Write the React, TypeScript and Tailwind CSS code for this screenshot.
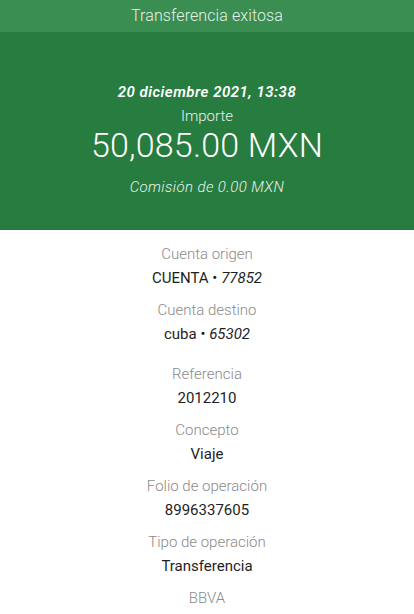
export default function App() {
  const rows: [string, React.ReactNode][] = [
    ["Referencia", "2012210"],
    ["Concepto", "Viaje"],
    ["Folio de operación", "8996337605"],
    ["Tipo de operación", "Transferencia"],
  ];
  return (
    <div className="w-[414px] h-[614px] overflow-hidden bg-white" style={{ fontFamily: "Roboto, 'Liberation Sans', sans-serif" }}>
      <div className="h-[32px] bg-[#3a8e51] flex items-center justify-center text-[#e6f2e9] text-[16px] font-light tracking-[0.1px]">
        Transferencia exitosa
      </div>
      <div className="h-[198px] bg-[#277c40] flex flex-col items-center text-white pt-[50px]">
        <div className="text-[15px] font-semibold italic leading-[20px] tracking-[0.5px]">20 diciembre 2021, 13:38</div>
        <div className="text-[15px] font-light leading-[20px] mt-[4px] text-[#e9f3ec]">Importe</div>
        <div className="text-[34px] font-light leading-[36px] mt-[1px] tracking-[0.2px]">50,085.00 MXN</div>
        <div className="text-[15px] font-light italic leading-[20px] mt-[14px] text-[#e9f3ec] tracking-[0.4px]">Comisión de 0.00 MXN</div>
      </div>
      <div className="flex flex-col items-center pt-[14px] text-[15px]">
        <div className="flex flex-col items-center">
          <div className="leading-[20px] text-[#8a8a8a] font-light">Cuenta origen</div>
          <div className="leading-[20px] mt-[4px] text-[#1e1e1e]">CUENTA • <span className="italic">77852</span></div>
        </div>
        <div className="flex flex-col items-center mt-[12px]">
          <div className="leading-[20px] text-[#8a8a8a] font-light">Cuenta destino</div>
          <div className="leading-[20px] mt-[4px] text-[#1e1e1e]">cuba • <span className="italic">65302</span></div>
        </div>
        <div className="flex flex-col items-center mt-[20px] gap-[12px]">
          {rows.map(([l, v]) => (
            <div key={l} className="flex flex-col items-center">
              <div className="leading-[20px] text-[#8a8a8a] font-light">{l}</div>
              <div className="leading-[20px] mt-[4px] text-[#1e1e1e]">{v}</div>
            </div>
          ))}
          <div className="leading-[20px] text-[#8a8a8a] font-light">BBVA</div>
        </div>
      </div>
    </div>
  );
}
